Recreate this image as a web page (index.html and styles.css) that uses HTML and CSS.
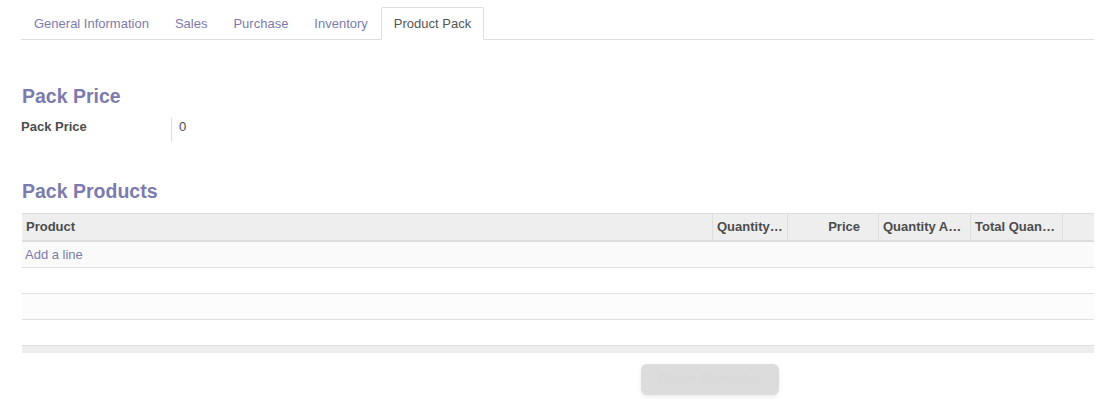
FILE: index.html
```html
<!DOCTYPE html>
<html>
<head>
<meta charset="utf-8">
<link rel="stylesheet" href="styles.css">
</head>
<body>
<div class="sheet">
  <ul class="tabs">
    <li class="tab"><a>General Information</a></li>
    <li class="tab"><a>Sales</a></li>
    <li class="tab"><a>Purchase</a></li>
    <li class="tab"><a>Inventory</a></li>
    <li class="tab active"><a>Product Pack</a></li>
  </ul>

  <h2 class="group-title first">Pack Price</h2>
  <div class="field-row">
    <div class="field-label">Pack Price</div>
    <div class="field-value">0</div>
  </div>

  <h2 class="group-title second">Pack Products</h2>
  <div class="list">
    <div class="list-head">
      <div class="cell c-product">Product</div>
      <div class="cell c-qty sep">Quantity…</div>
      <div class="cell c-price sep num">Price</div>
      <div class="cell c-qa sep">Quantity A…</div>
      <div class="cell c-total sep">Total Quan…</div>
      <div class="cell c-last sep"></div>
    </div>
    <div class="list-row odd"><a class="add-line">Add a line</a></div>
    <div class="list-row"></div>
    <div class="list-row odd light"></div>
    <div class="list-row"></div>
    <div class="list-foot"></div>
  </div>
</div>
<div class="watermark">Deepin Screenshot</div>
</body>
</html>
```

FILE: styles.css
```css
* { box-sizing: border-box; }
html, body { margin: 0; background: #fff; }
body {
  font-family: "Liberation Sans", Arial, sans-serif;
  font-size: 13px;
  line-height: 18px;
  color: #4c4c4c;
  position: relative;
  height: 403px;
  overflow: hidden;
}
.sheet {
  padding: 7px 0 0 21px;
  width: 1094px;
}
.tabs {
  list-style: none;
  margin: 0;
  padding: 0;
  display: flex;
  border-bottom: 1px solid #ddd;
}
.tab {
  margin-bottom: -1px;
}
.tab a {
  display: block;
  padding: 7px 12px 6px;
  border: 1px solid transparent;
  color: #7c7bad;
}
.tab.active a {
  color: #555;
  background: #fff;
  border-color: #ddd #ddd #fff;
  border-radius: 2px 2px 0 0;
}
.group-title {
  margin: 0;
  font-size: 19.5px;
  line-height: 22px;
  font-weight: bold;
  color: #7c7bad;
  padding-left: 1px;
}
.group-title.first { margin-top: 45px; }
.group-title.second { margin-top: 38px; }
.field-row {
  display: flex;
  margin-top: 11px;
}
.field-label {
  width: 151px;
  font-weight: bold;
  border-right: 1px solid #ddd;
  padding-bottom: 6px;
}
.field-value {
  padding-left: 7px;
}
.list {
  margin-top: 11px;
  margin-left: 1px;
  width: 1072px;
}
.list-head {
  display: flex;
  background: #eee;
  border-top: 1px solid #ddd;
  border-bottom: 2px solid #ddd;
  font-weight: bold;
}
.cell {
  padding: 4px 4px;
  height: 26px;
  white-space: nowrap;
  overflow: hidden;
}
.cell.sep { border-left: 1px solid #dedede; }
.cell.num { text-align: right; padding-right: 18px; }
.c-product { width: 690px; }
.c-qty { width: 75px; }
.c-price { width: 91px; }
.c-qa { width: 92px; }
.c-total { width: 92px; }
.c-last { flex: 1; }
.list-row {
  height: 26px;
  border-bottom: 1px solid #e0e0e0;
  padding: 4px 3px;
}
.list-row.odd { background: #fafafa; }
.list-row.light { background: #fcfcfc; }
.add-line {
  color: #7c7bad;
}
.list-foot {
  height: 7px;
  background: #eee;
}
.watermark {
  position: absolute;
  left: 641px;
  top: 364px;
  width: 138px;
  height: 31px;
  border-radius: 6px;
  background: #dcdcdc;
  box-shadow: 0 2px 4px rgba(0, 0, 0, 0.08);
  color: #d9d9d9;
  font-size: 12px;
  line-height: 31px;
  text-align: center;
}
```
